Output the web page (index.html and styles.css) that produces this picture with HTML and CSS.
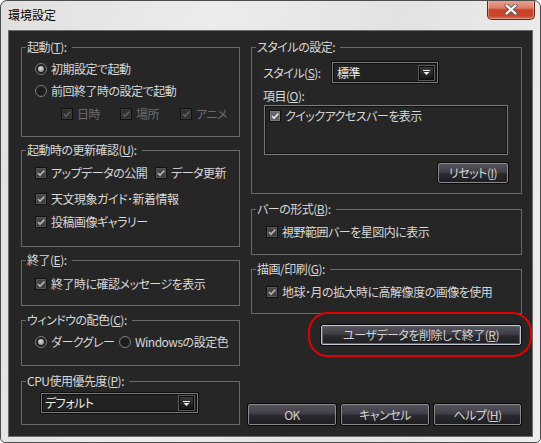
FILE: index.html
```html
<!DOCTYPE html>
<html lang="ja">
<head>
<meta charset="utf-8">
<title>環境設定</title>
<link rel="stylesheet" href="styles.css">
</head>
<body>
<div class="window">
  <div class="titlebar">
    <span class="title">環境設定</span>
    <div class="close">
      <svg width="14" height="11" viewBox="0 0 14 11"><path class="x-o" d="M2.5 1.5 L11.5 9.5 M11.5 1.5 L2.5 9.5"/><path class="x-i" d="M2.5 1.5 L11.5 9.5 M11.5 1.5 L2.5 9.5"/></svg>
    </div>
  </div>
  <div class="client">
    <div class="col">
      <fieldset class="grp">
        <legend>起動(<u>T</u>):</legend>
        <div class="gbody gb-start">
          <div class="row"><span class="rb on"></span><span>初期設定で起動</span></div>
          <div class="row"><span class="rb"></span><span>前回終了時の設定で起動</span></div>
          <div class="row row23 sub">
            <div class="item w59 dis"><span class="cb"><svg viewBox="0 0 10 10"><path d="M2 5 L4 7.3 L8.3 2.6"/></svg></span><span>日時</span></div>
            <div class="item w60 dis"><span class="cb"><svg viewBox="0 0 10 10"><path d="M2 5 L4 7.3 L8.3 2.6"/></svg></span><span>場所</span></div>
            <div class="item dis"><span class="cb"><svg viewBox="0 0 10 10"><path d="M2 5 L4 7.3 L8.3 2.6"/></svg></span><span>アニメ</span></div>
          </div>
        </div>
      </fieldset>

      <fieldset class="grp mt6">
        <legend>起動時の更新確認(<u>U</u>):</legend>
        <div class="gbody gb-update">
          <div class="row">
            <div class="item w116"><span class="cb"><svg viewBox="0 0 10 10"><path d="M2 5 L4 7.3 L8.3 2.6"/></svg></span><span>アップデータの公開</span></div>
            <div class="item"><span class="cb"><svg viewBox="0 0 10 10"><path d="M2 5 L4 7.3 L8.3 2.6"/></svg></span><span>データ更新</span></div>
          </div>
          <div class="row mt4"><span class="cb"><svg viewBox="0 0 10 10"><path d="M2 5 L4 7.3 L8.3 2.6"/></svg></span><span>天文現象ガイド･新着情報</span></div>
          <div class="row mt1"><span class="cb"><svg viewBox="0 0 10 10"><path d="M2 5 L4 7.3 L8.3 2.6"/></svg></span><span>投稿画像ギャラリー</span></div>
        </div>
      </fieldset>

      <fieldset class="grp mt6">
        <legend>終了(<u>E</u>):</legend>
        <div class="gbody gb-exit">
          <div class="row"><span class="cb"><svg viewBox="0 0 10 10"><path d="M2 5 L4 7.3 L8.3 2.6"/></svg></span><span>終了時に確認メッセージを表示</span></div>
        </div>
      </fieldset>

      <fieldset class="grp mt7">
        <legend>ウィンドウの配色(<u>C</u>):</legend>
        <div class="gbody gb-color">
          <div class="row">
            <div class="item w80"><span class="rb on"></span><span>ダークグレー</span></div>
            <div class="item"><span class="rb"></span><span>Windowsの設定色</span></div>
          </div>
        </div>
      </fieldset>

      <fieldset class="grp mt8">
        <legend>CPU使用優先度(<u>P</u>):</legend>
        <div class="gbody gb-cpu">
          <div class="select sel-cpu"><span class="sel-text">デフォルト</span><span class="sel-btn"><svg width="7" height="5" viewBox="0 0 7 5"><rect x="0" y="0" width="7" height="1"/><polygon points="0.5,2 6.5,2 3.5,5"/></svg></span></div>
        </div>
      </fieldset>
    </div>

    <div class="col">
      <fieldset class="grp">
        <legend>スタイルの設定:</legend>
        <div class="gbody gb-style">
          <div class="style-row">
            <span class="lbl">スタイル(<u>S</u>):</span>
            <div class="select sel-style"><span class="sel-text">標準</span><span class="sel-btn"><svg width="7" height="5" viewBox="0 0 7 5"><rect x="0" y="0" width="7" height="1"/><polygon points="0.5,2 6.5,2 3.5,5"/></svg></span></div>
          </div>
          <div class="lbl lbl-items">項目(<u>O</u>):</div>
          <div class="listbox">
            <div class="list-item"><span class="cb light"><svg viewBox="0 0 10 10"><path d="M2 5 L4 7.3 L8.3 2.6"/></svg></span><span>クイックアクセスバーを表示</span></div>
          </div>
          <button class="btn btn-reset">リセット(<u>I</u>)</button>
        </div>
      </fieldset>

      <fieldset class="grp mt8">
        <legend>バーの形式(<u>B</u>):</legend>
        <div class="gbody gb-bar">
          <div class="row"><span class="cb"><svg viewBox="0 0 10 10"><path d="M2 5 L4 7.3 L8.3 2.6"/></svg></span><span>視野範囲バーを星図内に表示</span></div>
        </div>
      </fieldset>

      <fieldset class="grp mt7">
        <legend>描画/印刷(<u>G</u>):</legend>
        <div class="gbody gb-draw">
          <div class="row"><span class="cb"><svg viewBox="0 0 10 10"><path d="M2 5 L4 7.3 L8.3 2.6"/></svg></span><span>地球･月の拡大時に高解像度の画像を使用</span></div>
        </div>
      </fieldset>

      <div class="user-wrap">
        <button class="btn btn-default btn-user">ユーザデータを削除して終了(<u>R</u>)</button>
        <span class="ring"></span>
      </div>

      <div class="actions">
        <button class="btn w88">OK</button>
        <button class="btn w88">キャンセル</button>
        <button class="btn w87">ヘルプ(<u>H</u>)</button>
      </div>
    </div>
  </div>
</div>
</body>
</html>
```

FILE: styles.css
```css
* { box-sizing: border-box; }
html, body { margin: 0; padding: 0; }
body {
  width: 541px;
  height: 443px;
  overflow: hidden;
  background: #ffffff;
  font-family: "Noto Sans CJK JP", "Noto Sans", sans-serif;
  font-size: 12px;
  font-feature-settings: "palt" 1;
}
u { text-decoration: underline; text-underline-offset: 1px; }

.window {
  width: 541px;
  height: 443px;
  border: 1px solid #4c4c4c;
  border-radius: 7px 7px 5px 5px;
  background: linear-gradient(100deg, #e0e0e0 0%, #ececec 35%, #e2e2e2 65%, #eeeeee 100%);
  padding: 0 7px 5px;
  display: flex;
  flex-direction: column;
  overflow: hidden;
}

.titlebar {
  height: 29px;
  margin: 0 -7px;
  padding: 0 5px 0 7px;
  display: flex;
  align-items: flex-start;
  flex: none;
}
.title {
  line-height: 27px;
  color: #000;
  font-size: 12px;
  font-feature-settings: normal;
}
.close {
  margin-left: auto;
  margin-top: -1px;
  width: 48px;
  height: 20px;
  border: 1px solid #6a2116;
  border-top: 0;
  border-radius: 0 0 5px 5px;
  background: linear-gradient(#eaa696 0%, #dc7c67 42%, #c7452c 52%, #c84329 80%, #d7674d 100%);
  box-shadow: inset 0 0 0 1px rgba(255, 255, 255, 0.35);
  display: flex;
  align-items: center;
  justify-content: center;
}
.close .x-o { stroke: #5a5a5a; stroke-width: 4; stroke-linecap: round; fill: none; }
.close .x-i { stroke: #ffffff; stroke-width: 2.2; stroke-linecap: round; fill: none; }

.client {
  flex: 1;
  background: #262626;
  border: 1px solid #6c6c6c;
  padding: 9px 10px 11px 12px;
  display: grid;
  grid-template-columns: 219px 271px;
  column-gap: 11px;
  color: #d8d8d8;
  line-height: 14px;
  letter-spacing: -0.5px;
}
.col {
  display: flex;
  flex-direction: column;
  min-height: 0;
}

.grp {
  margin: 0;
  padding: 0;
  border: 1px solid #696969;
  min-width: 0;
}
.grp legend {
  padding: 0 5px 0 1px;
  margin-left: 4px;
  line-height: 14px;
  height: 14px;
  color: #d8d8d8;
}
.mt6 { margin-top: 6px; }
.mt7 { margin-top: 7px; }
.mt8 { margin-top: 8px; }
.mt4 { margin-top: 4px; }
.mt1 { margin-top: 1px; }

.gbody { display: flex; flex-direction: column; }
.gb-start { padding: 4px 0 11px 13px; }
.gb-update { padding: 5px 0 13px 13px; }
.gb-exit { padding: 6px 0 10px 13px; }
.gb-color { padding: 4px 0 12px 13px; }
.gb-cpu { padding: 5px 0 11px 19px; }
.gb-style { padding: 8px 13px 10px 11px; }
.gb-bar { padding: 5px 0 11px 14px; }
.gb-draw { padding: 5px 0 10px 14px; }

.row {
  height: 22px;
  display: flex;
  align-items: center;
  gap: 4px;
  white-space: nowrap;
}
.row23 { height: 23px; }
.row.sub { gap: 0; padding-left: 26px; }
.item {
  display: flex;
  align-items: center;
  gap: 4px;
  flex: none;
}
.w59 { width: 59px; }
.w60 { width: 60px; }
.w80 { width: 80px; }
.w116 { width: 116px; }
.dis { color: #6c6c6c; }

/* checkbox */
.cb {
  width: 12px;
  height: 12px;
  flex: none;
  border: 1px solid #111111;
  background: linear-gradient(#484848, #3a3a3a);
  box-shadow: inset 0 0 0 1px #575757;
  display: flex;
}
.cb svg { width: 10px; height: 10px; }
.cb path { fill: none; stroke: #b4b4b4; stroke-width: 1.6; }
.dis .cb {
  background: #2f2f2f;
  box-shadow: inset 0 0 0 1px #3a3a3a;
}
.dis .cb path { stroke: #5e5e5e; }
.cb.light {
  background: linear-gradient(#6a6a6a, #585858);
  box-shadow: inset 0 0 0 1px #7a7a7a;
}
.cb.light path { stroke: #e6e6e6; }

/* radio */
.rb {
  width: 12px;
  height: 12px;
  flex: none;
  border-radius: 50%;
  border: 1px solid #7a7a7a;
  background: radial-gradient(circle, #1c1c1c 40%, #2e2e2e 100%);
  display: flex;
  align-items: center;
  justify-content: center;
}
.rb.on::after {
  content: "";
  width: 6px;
  height: 6px;
  border-radius: 50%;
  background: radial-gradient(circle at 40% 35%, #e2e2e2, #8a8a8a 80%);
}

/* select */
.select {
  display: flex;
  align-items: center;
  border: 1px solid #7c7c7c;
  box-shadow: inset 0 0 0 1px #0e0e0e, 0 0 0 1px #0e0e0e;
  background: #222222;
  padding: 0 2px 0 2px;
  color: #ececec;
}
.sel-cpu { width: 157px; height: 20px; }
.sel-style { width: 106px; height: 21px; }
.sel-text { flex: 1; padding-left: 1px; }
.sel-style .sel-text { padding-left: 2px; }
.sel-btn {
  width: 17px;
  height: 16px;
  border: 1px solid #5a5a5a;
  box-shadow: inset 0 0 0 1px #0a0a0a;
  background: linear-gradient(#3c3c3c, #141414);
  display: flex;
  align-items: center;
  justify-content: center;
}
.sel-btn svg { fill: #f0f0f0; }

.style-row {
  display: flex;
  align-items: center;
  height: 21px;
}
.lbl { white-space: nowrap; }
.style-row .lbl { width: 69px; }
.lbl-items { margin-top: 6px; height: 14px; }

.listbox {
  margin-top: 2px;
  margin-left: 1px;
  height: 50px;
  border: 1px solid #7a7a7a;
  box-shadow: inset 0 0 0 1px #111111;
  background: #262626;
  padding: 2px 4px;
}
.list-item {
  height: 16px;
  display: flex;
  align-items: center;
  gap: 4px;
  white-space: nowrap;
}

/* buttons */
.btn {
  font: inherit;
  font-size: 12px;
  line-height: 14px;
  letter-spacing: -0.5px;
  color: #d2d2d2;
  height: 20px;
  padding: 0;
  border: 1px solid #8a8a8a;
  border-radius: 2px;
  box-shadow: 0 0 0 1px #0a0a0a;
  background: linear-gradient(#55525c 0%, #403e46 45%, #2a292e 55%, #1e1d21 100%);
  display: flex;
  align-items: center;
  justify-content: center;
  white-space: nowrap;
}
.btn-reset {
  width: 70px;
  margin-top: 8px;
  align-self: flex-end;
}
.btn-default {
  border-color: #c4c8d2;
  box-shadow: 0 0 0 1px #0a0a0a, inset 0 0 0 1px #5c5e66;
}
.btn-user { width: 200px; }

.user-wrap {
  position: relative;
  margin-top: 11px;
  margin-right: 1px;
  align-self: flex-end;
}
.ring {
  position: absolute;
  left: -13px;
  top: -13px;
  width: 224px;
  height: 45px;
  border: 2px solid #e10000;
  border-radius: 20px;
  pointer-events: none;
}

.actions {
  margin-top: auto;
  margin-right: 1px;
  align-self: flex-end;
  display: flex;
  gap: 5px;
}
.actions .btn { height: 21px; }
.w88 { width: 88px; }
.w87 { width: 87px; }
```
